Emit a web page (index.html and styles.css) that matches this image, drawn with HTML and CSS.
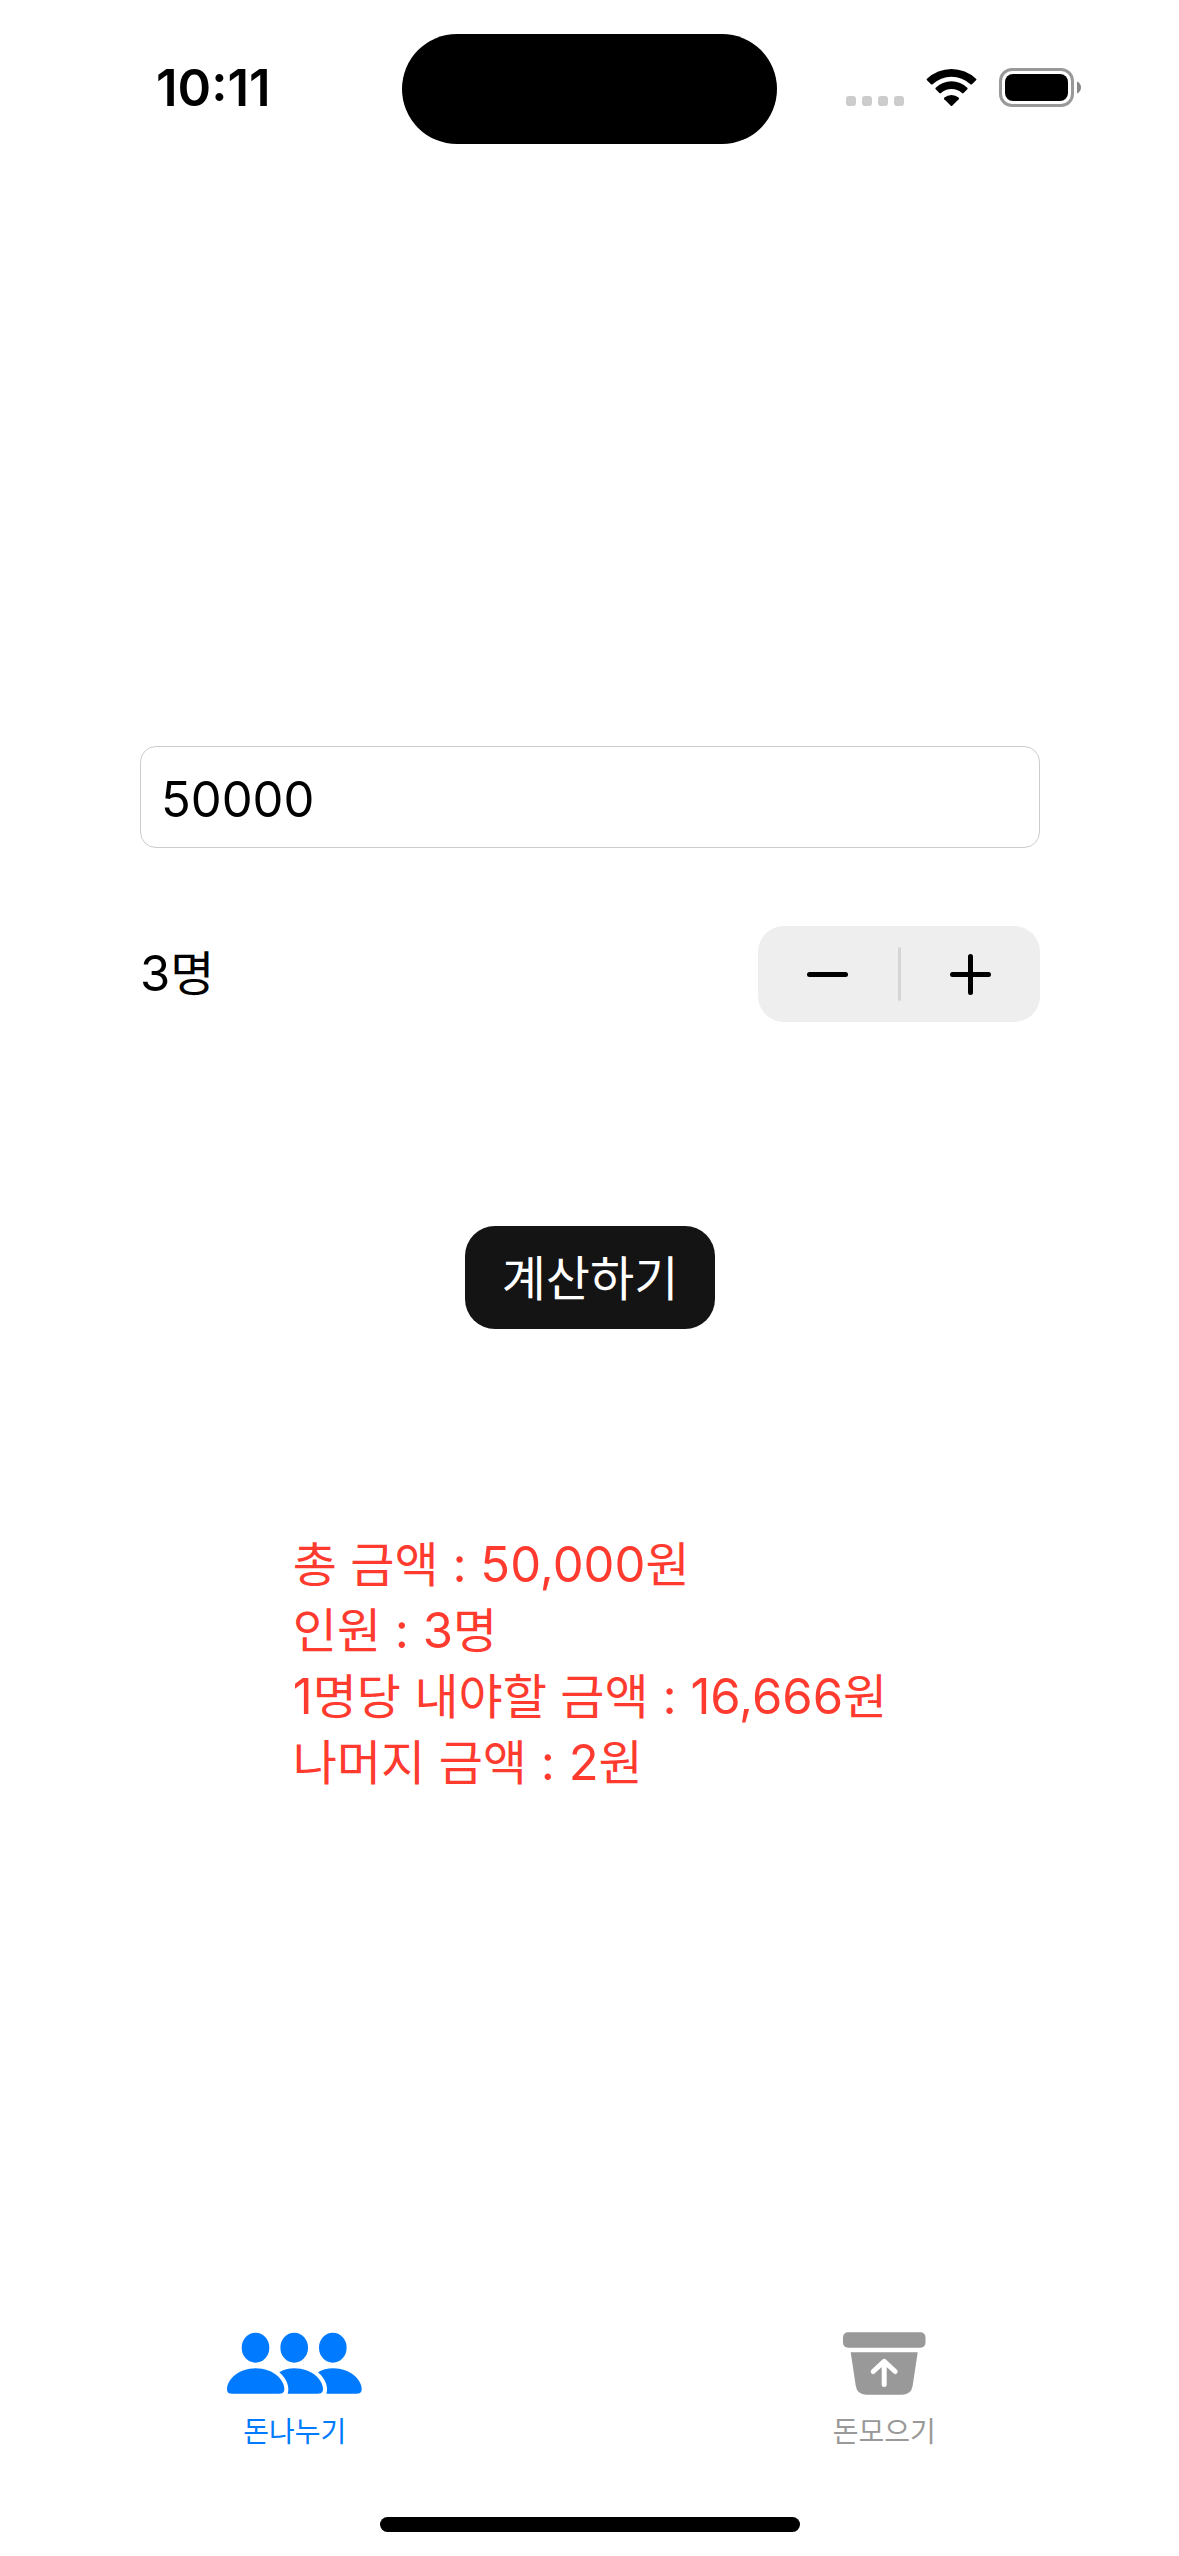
FILE: index.html
```html
<!DOCTYPE html>
<html lang="ko">
<head>
<meta charset="utf-8">
<meta name="viewport" content="width=device-width, initial-scale=1">
<title>돈나누기</title>
<link rel="stylesheet" href="styles.css">
</head>
<body>
<header class="status-bar">
  <time class="status-time">10:11</time>
  <div class="island"></div>
  <div class="status-icons">
    <svg class="signal" width="58" height="39" viewBox="0 0 58 39" aria-hidden="true">
      <rect x="0" y="28" width="10" height="10" rx="3"/>
      <rect x="16" y="28" width="10" height="10" rx="3"/>
      <rect x="32" y="28" width="10" height="10" rx="3"/>
      <rect x="48" y="28" width="10" height="10" rx="3"/>
    </svg>
    <svg width="51" height="39" viewBox="0 0 51 39" aria-hidden="true">
      <path d="M1 12.2Q0 11.5 1 10.7A35.5 35.5 0 0 1 50 10.7Q51 11.5 50 12.2L46 16.2Q45.2 17 44.4 16.2A27.5 27.5 0 0 0 6.6 16.2Q5.8 17 5 16.2Z"/>
      <path d="M9.7 21.2Q9 20.5 9.7 19.7A22.8 22.8 0 0 1 41.3 19.7Q42 20.5 41.3 21.2L37.6 25Q36.8 25.8 36 25A15.5 15.5 0 0 0 15 25Q14.2 25.8 13.4 25Z"/>
      <path d="M18.3 31.2Q17.6 30.3 18.4 29.6A11 11 0 0 1 32.6 29.6Q33.4 30.3 32.7 31.2L26.2 37.7Q25.5 38.3 24.8 37.7Z"/>
    </svg>
    <svg width="83" height="39" viewBox="0 0 83 39" aria-hidden="true">
      <rect class="battery-shell" x="1.5" y="1.5" width="72" height="36" rx="11.5"/>
      <rect x="6" y="6" width="63" height="27" rx="8"/>
      <path class="battery-cap" d="M78 13.5Q82 15.3 82 19.5T78 25.5Z"/>
    </svg>
  </div>
</header>

<main class="content">
  <form class="calculator">
    <input class="amount" type="text" inputmode="numeric" value="50000" aria-label="금액">
    <div class="people-row">
      <span class="people">3<span class="ko">명</span></span>
      <div class="stepper">
        <button class="step" type="button" aria-label="인원 줄이기">
          <svg width="43" height="43" viewBox="0 0 43 43"><path d="M3.5 21.5H39.5"/></svg>
        </button>
        <span class="stepper-divider"></span>
        <button class="step" type="button" aria-label="인원 늘리기">
          <svg width="43" height="43" viewBox="0 0 43 43"><path d="M3.5 21.5H39.5M21.5 3.5V39.5"/></svg>
        </button>
      </div>
    </div>
    <button class="submit ko" type="button">계산하기</button>
    <output class="result">
      <span class="line"><span class="ko">총 금액</span> : 50,000<span class="ko">원</span></span>
      <span class="line"><span class="ko">인원</span> : 3<span class="ko">명</span></span>
      <span class="line">1<span class="ko">명당 내야할 금액</span> : 16,666<span class="ko">원</span></span>
      <span class="line"><span class="ko">나머지 금액</span> : 2<span class="ko">원</span></span>
    </output>
  </form>
</main>

<nav class="tab-bar">
  <a class="tab tab-active" href="#split" aria-current="page">
    <svg width="138" height="64" viewBox="0 -1 138 64" aria-hidden="true">
      <ellipse cx="29.5" cy="15.7" rx="13.8" ry="15"/>
      <ellipse cx="68.2" cy="15.7" rx="13.8" ry="15"/>
      <ellipse cx="106.8" cy="15.7" rx="13.8" ry="15"/>
      <path d="M1 57C1 48 12 36.3 29.7 36.3S58.3 48 58.3 57C58.3 60 57 61.7 53 61.7H6C2 61.7 1 60 1 57Z"/>
      <path d="M53.3 40.2C57.5 37.6 62.5 36.3 68.4 36.3C86 36.3 97 48 97 57C97 60 95.7 61.7 91.7 61.7H61.7C63.8 55 61 47 53.3 40.2Z"/>
      <path d="M92 40.2C96.2 37.6 101.2 36.3 107.1 36.3C124.7 36.3 135.7 48 135.7 57C135.7 60 134.4 61.7 130.4 61.7H100.4C102.5 55 99.7 47 92 40.2Z"/>
    </svg>
    <span class="tab-label">돈나누기</span>
  </a>
  <a class="tab" href="#collect">
    <svg width="85" height="64" viewBox="0 0 85 64" aria-hidden="true">
      <rect x="1" y="1.3" width="82.5" height="15.4" rx="5"/>
      <path d="M8.7 21.3H75.7L70.7 54.5Q69.2 63.7 60.5 63.7H24Q15.2 63.7 13.7 54.5Z"/>
      <path class="tab-arrow" d="M42.2 53.5V30.500M31.2 40.5L42.2 30.3L53.2 40.5"/>
    </svg>
    <span class="tab-label">돈모으기</span>
  </a>
</nav>
<div class="home-indicator"></div>
</body>
</html>
```
FILE: styles.css
```css
* {
  box-sizing: border-box;
}

body {
  margin: 0;
  min-height: 100vh;
  display: flex;
  flex-direction: column;
  background: #fff;
  color: #000;
  font-family: Inter, "Noto Sans CJK KR", sans-serif;
  font-size: 49px;
  line-height: 66px;
}

button,
input {
  margin: 0;
  border: 0;
  padding: 0;
  background: none;
  color: inherit;
  font: inherit;
}

.ko {
  font-family: "Noto Sans CJK KR", sans-serif;
  font-size: 48px;
}

.status-bar {
  display: grid;
  grid-template-columns: 1fr 375px 1fr;
  align-items: center;
  padding-top: 34px;
}

.status-time {
  padding: 0 0 2px 156px;
  font-size: 51px;
  font-weight: 600;
}

.island {
  height: 110px;
  border-radius: 55px;
  background: #000;
}

.status-icons {
  display: flex;
  justify-content: flex-end;
  gap: 22px;
  padding: 0 97px 3px 0;
}

.signal {
  fill: #ccc;
}

.battery-shell {
  fill: none;
  stroke: #999;
  stroke-width: 3;
}

.battery-cap {
  fill: #888;
}

.content {
  flex: 1;
  padding: 602px 139px 0 140px;
}

.calculator {
  display: flex;
  flex-direction: column;
}

.amount {
  width: 100%;
  height: 102px;
  padding: 4px 20px 0;
  border: 1px solid #ccc;
  border-radius: 16px;
  outline: 0;
}

.people-row {
  display: flex;
  align-items: center;
  justify-content: space-between;
  margin-top: 78px;
}

.people {
  padding-bottom: 4px;
}

.stepper {
  display: flex;
  align-items: center;
  width: 282px;
  height: 96px;
  border-radius: 26px;
  background: #eee;
}

.step {
  display: flex;
  flex: 1;
  align-items: center;
  justify-content: center;
  height: 100%;
}

.step svg {
  fill: none;
  stroke: #000;
  stroke-width: 5;
  stroke-linecap: round;
}

.stepper-divider {
  width: 3px;
  height: 54px;
  border-radius: 2px;
  background: #d5d5d5;
}

.submit {
  align-self: center;
  height: 103px;
  margin-top: 204px;
  padding: 0 37px 6px;
  border-radius: 30px;
  background: #141414;
  color: #fff;
}

.result {
  align-self: center;
  margin-top: 199px;
  color: #ff3b30;
}

.line {
  display: block;
  height: 66px;
  white-space: nowrap;
}

.tab-bar {
  display: grid;
  grid-template-columns: 1fr 1fr;
}

.tab {
  display: flex;
  flex-direction: column;
  align-items: center;
  gap: 17px;
  color: #999;
  text-decoration: none;
}

.tab svg {
  fill: currentColor;
}

.tab-active {
  color: #007aff;
}

.tab .tab-arrow {
  fill: none;
  stroke: #fff;
  stroke-width: 5;
  stroke-linecap: round;
  stroke-linejoin: round;
}

.tab-label {
  font-family: "Noto Sans CJK KR", sans-serif;
  font-size: 28px;
  line-height: 36px;
}

.home-indicator {
  align-self: center;
  width: 420px;
  height: 15px;
  margin: 69px 0 24px;
  border-radius: 8px;
  background: #000;
}
```
